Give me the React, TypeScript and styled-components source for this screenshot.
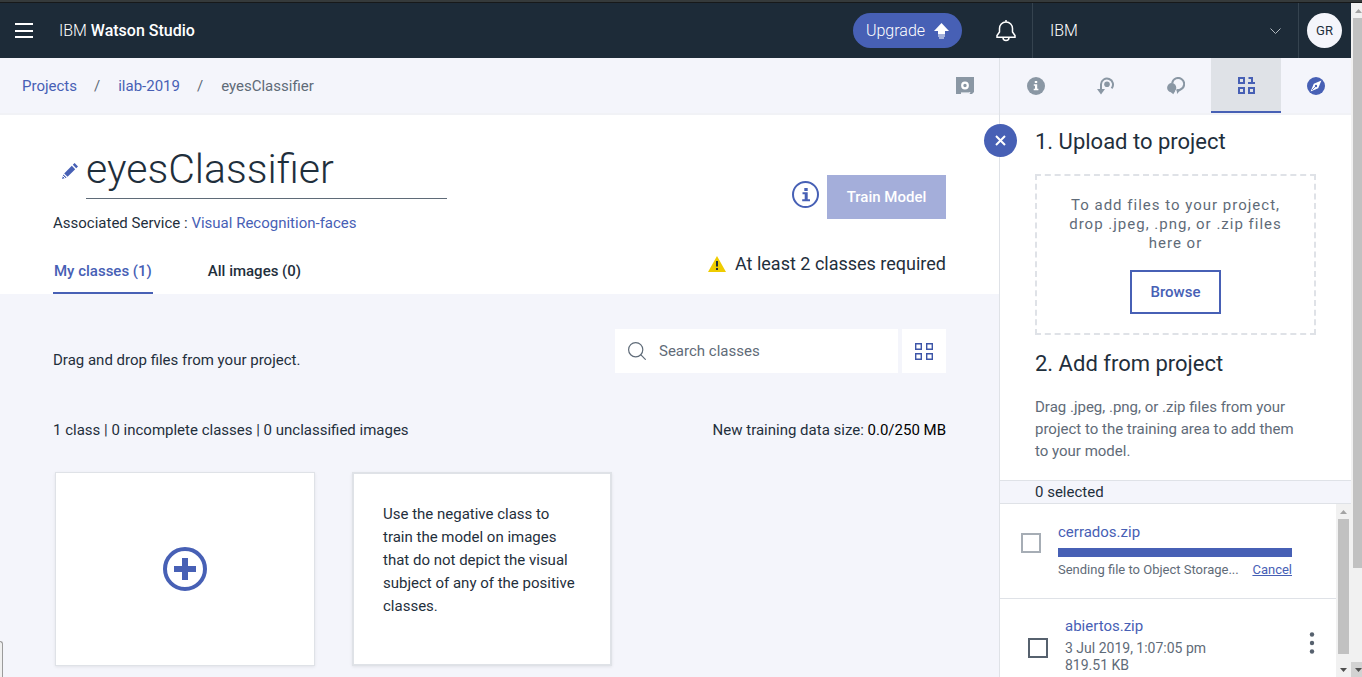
import React from "react";
import styled, { createGlobalStyle, css } from "styled-components";

const c = {
  brand: "#4760b5",
  navy: "#1d2b38",
  ink: "#1f2f3c",
  muted: "#5f6b78",
  icon: "#8a97a4",
  line: "#dfe2e7",
  mist: "#f4f5fb",
};

const Global = createGlobalStyle`
  * { box-sizing: border-box; }
  html, body { margin: 0; }
  body, button, input, select {
    font-family: Roboto, "IBM Plex Sans", "Liberation Sans", sans-serif;
    font-size: 15px;
    color: ${c.ink};
  }
  button { padding: 0; border: 0; background: none; cursor: pointer; }
  a { color: ${c.brand}; text-decoration: none; }
  h1, h2, p { margin: 0; font-weight: 400; }
  svg { display: block; flex: none; }
`;

const Window = styled.div`
  position: relative;
  display: flex;
  flex-direction: column;
  height: 100vh;
  overflow: hidden;
`;

const WindowEdge = styled.div`
  flex: none;
  height: 3px;
  background: #353a3b;
  border-bottom: 1px solid #17191a;
`;

const Viewport = styled.div`
  flex: 1;
  min-height: 0;
  display: flex;
`;

const Page = styled.div`
  flex: 1;
  min-width: 0;
  display: flex;
  flex-direction: column;
`;

/* Header */

const Header = styled.header`
  flex: none;
  display: flex;
  align-items: center;
  height: 55px;
  padding: 0 9px 0 15px;
  background: ${c.navy};
  color: #fff;
`;

const MenuButton = styled.button`
  display: flex;
  flex-direction: column;
  justify-content: space-between;
  width: 18px;
  height: 15px;
  margin-right: 26px;
`;

const MenuLine = styled.span`
  height: 2px;
  background: #fff;
`;

const Brand = styled.div`
  flex: 1;
  font-size: 16px;
  font-weight: 300;
  strong { font-weight: 500; }
`;

const UpgradeButton = styled.button`
  display: flex;
  align-items: center;
  justify-content: center;
  gap: 9px;
  width: 109px;
  height: 35px;
  border-radius: 18px;
  background: ${c.brand};
  color: #fff;
  font-size: 16px;
  font-weight: 300;
`;

const BellButton = styled.button`
  margin: 0 16px 0 34px;
`;

const AccountBox = styled.div`
  display: flex;
  align-items: center;
  width: 267px;
  height: 100%;
  margin-right: 8px;
  border: solid #35434f;
  border-width: 0 1px;
  svg { margin: 2px 17px 0 -28px; pointer-events: none; }
`;

const AccountSelect = styled.select`
  flex: 1;
  height: 100%;
  padding: 0 17px;
  appearance: none;
  border: 0;
  background: transparent;
  color: #fff;
  font-size: 16px;
  font-weight: 300;
`;

const Avatar = styled.button`
  width: 35px;
  height: 35px;
  border-radius: 50%;
  background: ${c.mist};
  font-size: 13px;
`;

/* Main column */

const Columns = styled.div`
  flex: 1;
  min-height: 0;
  display: flex;
`;

const Main = styled.main`
  flex: 1;
  min-width: 0;
  display: flex;
  flex-direction: column;
  background: ${c.mist};
`;

const barStyle = css`
  flex: none;
  display: flex;
  height: 57px;
  border-bottom: 2px solid #f1f2f6;
  background: ${c.mist};
`;

const BreadcrumbBar = styled.nav`
  ${barStyle}
  align-items: center;
  padding: 0 25px 0 22px;
`;

const Crumbs = styled.ol`
  flex: 1;
  display: flex;
  gap: 17px;
  margin: 0;
  padding: 0;
  list-style: none;
  color: ${c.muted};
  li + li::before { content: "/"; margin-right: 18px; }
`;

const Hero = styled.section`
  display: flex;
  justify-content: space-between;
  height: 179px;
  padding: 0 53px;
  background: #fff;
`;

const HeroSide = styled.div<{ $end?: boolean }>`
  display: flex;
  flex-direction: column;
  justify-content: space-between;
  align-items: ${(p) => (p.$end ? "flex-end" : "flex-start")};
  padding: ${(p) => (p.$end ? "60px 0 18px" : "28px 0 0")};
`;

const TitleRow = styled.div`
  display: flex;
  align-items: center;
  gap: 8px;
  padding-left: 9px;
  margin-bottom: -2px;
`;

const TitleInput = styled.input`
  width: 361px;
  height: 56px;
  padding: 0 0 4px;
  border: 0;
  border-bottom: 1px solid ${c.muted};
  background: transparent;
  font-size: 41px;
  font-weight: 300;
`;

const Tabs = styled.div`
  display: flex;
  gap: 54px;
`;

const Tab = styled.button<{ $active?: boolean }>`
  height: 45px;
  padding: 0 1px;
  border-bottom: 2px solid ${(p) => (p.$active ? c.brand : "transparent")};
  color: ${(p) => (p.$active ? c.brand : c.ink)};
  font-weight: 500;
`;

const TrainRow = styled.div`
  display: flex;
  align-items: flex-start;
  gap: 8px;
`;

const InfoButton = styled.button`
  padding-top: 6px;
`;

const TrainButton = styled.button`
  width: 119px;
  height: 44px;
  background: #a4aeda;
  color: #fff;
  font-weight: 500;
`;

const Warning = styled.p`
  display: flex;
  align-items: center;
  gap: 9px;
  font-size: 18px;
  line-height: 24px;
`;

const Workspace = styled.section`
  flex: 1;
  min-height: 0;
  padding: 35px 53px 0;
`;

const SpreadRow = styled.div`
  display: flex;
  align-items: center;
  justify-content: space-between;
  line-height: 20px;
  b { font-weight: 400; color: #000; }
`;

const StatsRow = styled(SpreadRow)`
  padding: 47px 0 32px;
`;

const Hint = styled.p`
  padding-top: 18px;
`;

const SearchGroup = styled.div`
  display: flex;
  gap: 4px;
`;

const SearchBox = styled.label`
  display: flex;
  align-items: center;
  gap: 13px;
  width: 283px;
  height: 44px;
  padding: 0 13px;
  background: #fff;
`;

const SearchInput = styled.input`
  flex: 1;
  min-width: 0;
  padding: 0;
  border: 0;
  background: transparent;
  &::placeholder { color: ${c.muted}; opacity: 1; }
`;

const ViewButton = styled.button`
  display: grid;
  place-items: center;
  width: 44px;
  height: 44px;
  background: #fff;
`;

const Cards = styled.div`
  display: flex;
  gap: 37px;
  padding-left: 2px;
`;

const cardStyle = css`
  width: 260px;
  height: 194px;
  background: #fff;
  box-shadow: 0 1px 3px rgba(0, 0, 0, 0.08);
`;

const AddCard = styled.button`
  ${cardStyle}
  display: grid;
  place-items: center;
  border: 1px solid ${c.line};
`;

const NegativeCard = styled.article`
  ${cardStyle}
  padding: 29px 28px 0 29px;
  border: 2px solid ${c.line};
  line-height: 23px;
`;

/* Side panel */

const Panel = styled.aside`
  position: relative;
  flex: none;
  display: flex;
  flex-direction: column;
  width: 352px;
  border-left: 1px solid ${c.line};
  background: #fff;
`;

const PanelTabs = styled.nav`
  ${barStyle}
`;

const PanelTab = styled.button<{ $active?: boolean }>`
  flex: 1;
  display: grid;
  place-items: center;
  padding: 2px 0 0 1px;
  border-bottom: 2px solid transparent;
  ${(p) => p.$active && css`
    background: ${c.line};
    border-color: ${c.brand};
  `}
`;

const CloseButton = styled.button`
  position: absolute;
  top: 66px;
  left: -16px;
  display: grid;
  place-items: center;
  width: 33px;
  height: 33px;
  border-radius: 50%;
  background: ${c.brand};
`;

const PanelBody = styled.div`
  padding: 12px 35px 18px;
`;

const PanelTitle = styled.h2`
  font-size: 22px;
  line-height: 30px;
`;

const DropZone = styled.div`
  display: flex;
  flex-direction: column;
  align-items: center;
  gap: 17px;
  height: 161px;
  margin: 17px 0 14px;
  padding: 20px 26px 0;
  border: 2px dashed ${c.line};
  color: ${c.muted};
  line-height: 19px;
  letter-spacing: 1px;
  text-align: center;
`;

const BrowseButton = styled.button`
  width: 91px;
  height: 44px;
  border: 2px solid ${c.brand};
  color: ${c.brand};
  font-weight: 500;
`;

const PanelText = styled.p`
  padding: 17px 10px 0 0;
  color: ${c.muted};
  line-height: 22px;
`;

const SelectedBar = styled.div`
  flex: none;
  height: 24px;
  padding-left: 35px;
  border: solid ${c.line};
  border-width: 1px 0;
  background: ${c.mist};
  line-height: 22px;
`;

const FileArea = styled.div`
  flex: 1;
  min-height: 0;
  display: flex;
`;

const FileList = styled.ul`
  flex: 1;
  min-width: 0;
  margin: 0;
  padding: 0;
  overflow: hidden;
  list-style: none;
`;

const FileRow = styled.li<{ $inset?: boolean }>`
  display: flex;
  align-items: flex-start;
  gap: 17px;
  height: 95px;
  padding: ${(p) => (p.$inset ? "17px 16px 0 28px" : "18px 44px 0 21px")};
  border-bottom: 1px solid ${c.line};
`;

const FileCheck = styled.input<{ $muted?: boolean }>`
  flex: none;
  width: 20px;
  height: 20px;
  margin: ${(p) => (p.$muted ? "11px 0 0" : "22px 0 0")};
  appearance: none;
  border: 2px solid ${(p) => (p.$muted ? "#a6adb5" : "#56616e")};
  background: #fff;
`;

const FileInfo = styled.div`
  flex: 1;
  min-width: 0;
  color: ${c.muted};
  line-height: 17px;
`;

const FileName = styled.label`
  display: block;
  padding-bottom: 4px;
  color: ${c.brand};
  line-height: 20px;
`;

const Progress = styled.progress`
  display: block;
  width: 100%;
  height: 9px;
  margin: 2px 0 4px;
  appearance: none;
  border: 0;
  &::-webkit-progress-bar { background: ${c.line}; }
  &::-webkit-progress-value { background: ${c.brand}; }
`;

const FileStatus = styled.div`
  display: flex;
  justify-content: space-between;
  font-size: 13px;
  white-space: nowrap;
  a { text-decoration: underline; }
`;

const FileMeta = styled.div`
  font-size: 14px;
`;

const MoreButton = styled.button`
  padding-top: 15px;
`;

/* Scrollbars */

const Track = styled.div<{ $cut?: boolean }>`
  flex: none;
  display: flex;
  flex-direction: column;
  align-items: flex-start;
  width: ${(p) => (p.$cut ? 11 : 15)}px;
  overflow: hidden;
  background: #f1f1f1;
`;

const Arrow = styled.span<{ $pressed?: boolean }>`
  flex: none;
  display: grid;
  place-items: center;
  width: 15px;
  height: 15px;
  background: ${(p) => (p.$pressed ? "#d2d2d2" : "transparent")};
`;

const Thumb = styled.span<{ $grow: number }>`
  flex: ${(p) => p.$grow};
  width: 11px;
  margin-left: 2px;
  background: #c1c1c1;
`;

const TrackRest = styled.span<{ $grow: number }>`
  flex: ${(p) => p.$grow};
`;

const StatusBubble = styled.div`
  position: absolute;
  left: 0;
  bottom: 0;
  width: 3px;
  height: 36px;
  border: solid #9b9b9b;
  border-width: 1px 1px 0 0;
  border-radius: 0 3px 0 0;
  background: #f0f0f0;
`;

function Scrollbar({ thumb, rest, cut }: { thumb: number; rest: number; cut?: boolean }) {
  return (
    <Track $cut={cut} aria-hidden="true">
      <Arrow>
        <svg width="7" height="4"><path d="M0 4 3.500 0 7 4z" fill="#a3a3a3" /></svg>
      </Arrow>
      <Thumb $grow={thumb} />
      <TrackRest $grow={rest} />
      <Arrow $pressed={cut}>
        <svg width="7" height="4"><path d="M0 0 3.500 4 7 0z" fill="#505050" /></svg>
      </Arrow>
    </Track>
  );
}

const InfoIcon = () => (
  <svg width="18" height="18" viewBox="0 0 18 18">
    <circle cx="9" cy="9" r="9" fill={c.icon} />
    <path d="M7.800 4h2.400v2H7.800zM6.800 7.200h3.400v4.600h1.200v1.500H6.700v-1.500H8V8.700H6.800z" fill="#fff" />
  </svg>
);

const HistoryIcon = () => (
  <svg width="18" height="18" viewBox="0 0 18 18">
    <path d="M14.600 11.400A6 6 0 1 0 4 7.300V14" fill="none" stroke={c.icon} strokeWidth="2" />
    <path d="M0 12h8l-4 5.500z" fill={c.icon} />
    <circle cx="10" cy="7.200" r="2.800" fill={c.icon} />
  </svg>
);

const CommentsIcon = () => (
  <svg width="18" height="18" viewBox="0 0 18 18">
    <path d="M5.200 6.200A6 6 0 1 1 13.500 12.500L12 13.200H9.500" fill="none" stroke={c.icon} strokeWidth="2" />
    <path d="M9.800 12.200h4.400L10 17z" fill={c.icon} />
    <circle cx="4.700" cy="10.700" r="4.600" fill={c.icon} />
    <path d="M2.500 14h5.700L6.300 17.300z" fill={c.icon} />
  </svg>
);

const DataIcon = () => (
  <svg width="17" height="17" viewBox="0 0 17 17">
    <path d="M1 1h5v5H1zM1 11h5v5H1zM11 11h5v5h-5z" fill="none" stroke={c.brand} strokeWidth="2" />
    <path d="M10.500 0H15v5h2v2h-7V5h3V2h-2.500z" fill={c.brand} />
  </svg>
);

const CompassIcon = () => (
  <svg width="18" height="18" viewBox="0 0 18 18">
    <circle cx="9" cy="9" r="9" fill={c.brand} />
    <path d="M14.400 3.600 11.200 11.200l-7.600 3.200L6.800 6.800z" fill="#fff" />
    <circle cx="9" cy="9" r="1.200" fill={c.brand} />
    <path d="m9 9-4 4" stroke={c.brand} strokeWidth="0.800" />
  </svg>
);

const panelTabs = [
  { name: "Information", Icon: InfoIcon },
  { name: "History", Icon: HistoryIcon },
  { name: "Comments", Icon: CommentsIcon },
  { name: "Data", Icon: DataIcon, active: true },
  { name: "Explore", Icon: CompassIcon },
];

export default function App() {
  return (
    <Window>
      <Global />
      <WindowEdge />
      <Viewport>
        <Page>
          <Header>
            <MenuButton aria-label="Menu"><MenuLine /><MenuLine /><MenuLine /></MenuButton>
            <Brand>IBM <strong>Watson Studio</strong></Brand>
            <UpgradeButton>
              Upgrade
              <svg width="15" height="16" viewBox="0 0 15 16" fill="#fff">
                <path d="M7.500 0 15 8h-4v3.500H4V8H0zM4 12.500h7v1H4zM5 14.500h5v1H5z" />
              </svg>
            </UpgradeButton>
            <BellButton aria-label="Notifications">
              <svg width="20" height="22" viewBox="0 0 20 22" fill="none" stroke="#fff" strokeWidth="1.500">
                <path d="M10 0v2M10 2C6 2 3.500 5 3.500 8.500V12L1 15.500v1.700h18v-1.700L16.500 12V8.500C16.500 5 14 2 10 2zM7 17.500c0 4 6 4 6 0" />
              </svg>
            </BellButton>
            <AccountBox>
              <AccountSelect aria-label="Account"><option>IBM</option></AccountSelect>
              <svg width="11" height="7" fill="none" stroke="#b3bac0"><path d="m0.500 0.500 5 5 5-5" /></svg>
            </AccountBox>
            <Avatar>GR</Avatar>
          </Header>

          <Columns>
            <Main>
              <BreadcrumbBar aria-label="Breadcrumb">
                <Crumbs>
                  <li><a href="#projects">Projects</a></li>
                  <li><a href="#ilab">ilab-2019</a></li>
                  <li>eyesClassifier</li>
                </Crumbs>
                <button aria-label="Vault">
                  <svg width="18" height="17" viewBox="0 0 18 17">
                    <path d="M0 0h18v15l-2 2h-2.500l1-2H5v2H0z" fill={c.icon} />
                    <path d="M5 15.600h8.500" stroke="#c3cad2" />
                    <circle cx="9" cy="8.500" r="2.800" fill="none" stroke="#fff" strokeWidth="2.200" />
                  </svg>
                </button>
              </BreadcrumbBar>

              <Hero>
                <HeroSide>
                  <TitleRow>
                    <svg width="16" height="16" viewBox="0 0 16 16" fill={c.brand}>
                      <path d="m9.800 2.800 3.400 3.400-7.600 7.600-3.400-3.400zM10.800 1.800 12.600 0 16 3.400l-1.800 1.800zM1.400 11.400l3.200 3.200L0 16z" />
                      <path d="m1 13 2 2" stroke="#fff" />
                    </svg>
                    <TitleInput aria-label="Model name" defaultValue="eyesClassifier" />
                  </TitleRow>
                  <p>Associated Service : <a href="#service">Visual Recognition-faces</a></p>
                  <Tabs>
                    <Tab $active>My classes (1)</Tab>
                    <Tab>All images (0)</Tab>
                  </Tabs>
                </HeroSide>
                <HeroSide $end>
                  <TrainRow>
                    <InfoButton aria-label="Training information">
                      <svg width="27" height="27" viewBox="0 0 27 27">
                        <circle cx="13.500" cy="13.500" r="12.500" fill="none" stroke={c.brand} strokeWidth="2" />
                        <path d="M12.300 7h3.400v3h-3.400zM10.500 11.300h5.200v7H18v1.900h-7.800v-1.900h2.500v-5.100h-2.200z" fill={c.brand} />
                      </svg>
                    </InfoButton>
                    <TrainButton disabled>Train Model</TrainButton>
                  </TrainRow>
                  <Warning>
                    <svg width="18" height="16" viewBox="0 0 18 16">
                      <path d="M9 0 18 16H0z" fill="#efcc00" />
                      <path d="M8 5h2v5.500H8zM8 12h2v2H8z" fill={c.ink} />
                    </svg>
                    At least 2 classes required
                  </Warning>
                </HeroSide>
              </Hero>

              <Workspace>
                <SpreadRow>
                  <Hint>Drag and drop files from your project.</Hint>
                  <SearchGroup>
                    <SearchBox>
                      <svg width="18" height="18" viewBox="0 0 18 18" fill="none" stroke={c.muted} strokeWidth="1.200">
                        <circle cx="7.700" cy="7.700" r="7.100" /><path d="m12.700 12.700 5 5" />
                      </svg>
                      <SearchInput aria-label="Search classes" placeholder="Search classes" />
                    </SearchBox>
                    <ViewButton aria-label="Grid view">
                      <svg width="18" height="17" viewBox="0 0 18 17" fill="none" stroke="#3d55a8" strokeWidth="1.400">
                        <path d="M0.700 0.700h5.600v5.600H0.700zM11.700 0.700h5.600v5.600h-5.600zM0.700 10.700h5.600v5.600H0.700zM11.700 10.700h5.600v5.600h-5.600z" />
                      </svg>
                    </ViewButton>
                  </SearchGroup>
                </SpreadRow>
                <StatsRow>
                  <span>1 class | 0 incomplete classes | 0 unclassified images</span>
                  <span>New training data size: <b>0.0/250 MB</b></span>
                </StatsRow>
                <Cards>
                  <AddCard aria-label="Add a class">
                    <svg width="44" height="44" viewBox="0 0 44 44" fill="none" stroke={c.brand}>
                      <circle cx="22" cy="22" r="20" strokeWidth="4" />
                      <path d="M22 11v22M11 22h22" strokeWidth="6" />
                    </svg>
                  </AddCard>
                  <NegativeCard>
                    Use the negative class to train the model on images that do not depict the visual subject of any of the positive classes.
                  </NegativeCard>
                </Cards>
              </Workspace>
            </Main>

            <Panel>
              <PanelTabs>
                {panelTabs.map(({ name, Icon, active }) => (
                  <PanelTab key={name} aria-label={name} $active={active}><Icon /></PanelTab>
                ))}
              </PanelTabs>
              <CloseButton aria-label="Close panel">
                <svg width="11" height="11" stroke="#fff" strokeWidth="2"><path d="m1 1 9 9M10 1l-9 9" /></svg>
              </CloseButton>
              <PanelBody>
                <PanelTitle>1. Upload to project</PanelTitle>
                <DropZone>
                  <p>To add files to your project, drop .jpeg, .png, or .zip files here or</p>
                  <BrowseButton>Browse</BrowseButton>
                </DropZone>
                <PanelTitle>2. Add from project</PanelTitle>
                <PanelText>
                  Drag .jpeg, .png, or .zip files from your project to the training area to add them to your model.
                </PanelText>
              </PanelBody>
              <SelectedBar>0 selected</SelectedBar>
              <FileArea>
                <FileList>
                  <FileRow>
                    <FileCheck $muted type="checkbox" id="cerrados" />
                    <FileInfo>
                      <FileName htmlFor="cerrados">cerrados.zip</FileName>
                      <Progress aria-label="Upload progress" value={100} max={100} />
                      <FileStatus>Sending file to Object Storage... <a href="#cancel">Cancel</a></FileStatus>
                    </FileInfo>
                  </FileRow>
                  <FileRow $inset>
                    <FileCheck type="checkbox" id="abiertos" />
                    <FileInfo>
                      <FileName htmlFor="abiertos">abiertos.zip</FileName>
                      <FileMeta>3 Jul 2019, 1:07:05 pm<br />819.51 KB</FileMeta>
                    </FileInfo>
                    <MoreButton aria-label="More actions">
                      <svg width="16" height="24" viewBox="0 0 16 24" fill="#56616e">
                        <circle cx="8" cy="3.500" r="2.200" /><circle cx="8" cy="12" r="2.200" /><circle cx="8" cy="20.500" r="2.200" />
                      </svg>
                    </MoreButton>
                  </FileRow>
                </FileList>
                <Scrollbar thumb={135} rest={8} />
              </FileArea>
            </Panel>
          </Columns>
        </Page>
        <Scrollbar cut thumb={550} rest={94} />
      </Viewport>
      <StatusBubble />
    </Window>
  );
}
